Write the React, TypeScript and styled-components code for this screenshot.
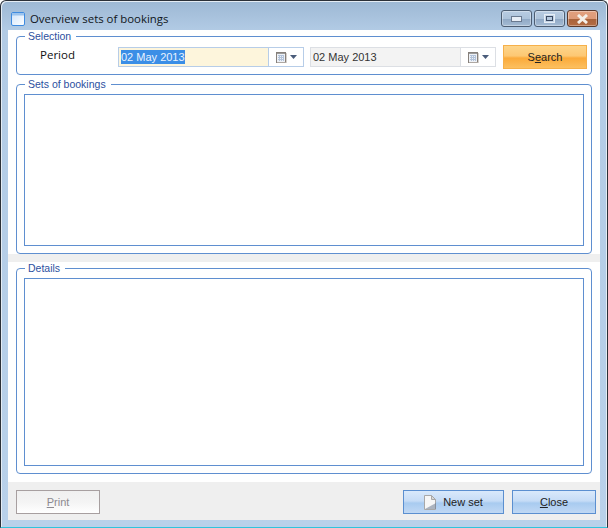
import styled, { createGlobalStyle } from "styled-components";

const Global = createGlobalStyle`
    html, body {
        margin: 0;
        padding: 0;
        background: #fff;
    }
    * {
        box-sizing: border-box;
    }
`

const Frame = styled.div`
    width: 608px;
    height: 528px;
    display: flex;
    flex-direction: column;
    padding: 0 7px 7px 7px;
    border: 1px solid #2b3038;
    border-bottom: 1px solid #30c4dc;
    border-radius: 6px 6px 0 0;
    box-shadow: inset 1px 1px 0 #e4ecf4, inset -1px 0 0 #e4ecf4;
    background: linear-gradient(to bottom, #9db8d4 0, #b2cbe5 30px, #b9d1ea 100%);
    font-family: "Liberation Sans", Arial, sans-serif;
    font-size: 11px;
    color: #1a1a1a;
`

const TitleBar = styled.div`
    height: 29px;
    flex: none;
    display: flex;
    align-items: flex-start;
    padding: 0 2px 0 3px;
`

const TitleIcon = styled.div`
    display: flex;
    margin-top: 11px;
`

const TitleText = styled.span`
    margin: 10px 0 0 5px;
    font-family: "Open Sans", sans-serif;
    font-size: 11.4px;
    line-height: 16px;
    color: #0f1620;
`

const WindowButtons = styled.div`
    margin-left: auto;
    display: flex;
    gap: 2px;
    margin-top: 9px;
`

const WindowButton = styled.div<{ $close?: boolean }>`
    width: 31px;
    height: 17px;
    display: flex;
    align-items: center;
    justify-content: center;
    border: 1px solid ${p => p.$close ? "#5a3a2c" : "#4c5d72"};
    border-radius: 3px;
    box-shadow: inset 0 0 0 1px rgba(255, 255, 255, 0.35);
    background: ${p => p.$close
        ? "linear-gradient(to bottom, #e2a07e 0, #dd9a78 52%, #a8623a 53%, #b46d44 100%)"
        : "linear-gradient(to bottom, #b8cce2 0, #adc3da 50%, #8fa8c4 51%, #a4bbd4 100%)"};
`

const Body = styled.div`
    flex: 1;
    min-height: 0;
    display: flex;
    flex-direction: column;
    background: #efefef;
`

const TopPane = styled.div`
    height: 224px;
    flex: none;
    display: flex;
    flex-direction: column;
    gap: 3px;
    padding: 0 8px;
    background: #fff;
`

const BottomPane = styled.div`
    height: 220px;
    flex: none;
    margin-top: 8px;
    padding: 0 8px;
    background: #fff;
`

const Group = styled.fieldset<{ $height: number }>`
    height: ${p => p.$height}px;
    margin: 0;
    padding: 0 7px 7px 7px;
    border: 1px solid #5f8fd0;
    border-radius: 4px;
    min-width: 0;
    flex: none;
`

const Legend = styled.legend`
    margin-left: 1px;
    padding: 0 5px 0 3px;
    font-size: 10.5px;
    line-height: 12px;
    color: #2c50a0;
`

const InnerBox = styled.div<{ $height: number }>`
    height: ${p => p.$height}px;
    margin-top: 4px;
    border: 1px solid #5f8fd0;
    background: #fff;
`

const SelectionRow = styled.div`
    display: flex;
    align-items: flex-start;
    margin-top: 3px;
`

const PeriodLabel = styled.span`
    width: 94px;
    flex: none;
    padding: 2px 0 0 16px;
    font-family: "Open Sans", sans-serif;
    font-size: 11.5px;
    line-height: 16px;
    color: #111;
`

const DateField = styled.div<{ $disabled?: boolean }>`
    width: 186px;
    height: 20px;
    flex: none;
    margin: 2px 6px 0 0;
    display: flex;
    border: 1px solid ${p => p.$disabled ? "#dcdfe4" : "#b7cde8"};
    background: #fff;
`

const DateValue = styled.div<{ $disabled?: boolean }>`
    flex: 1;
    display: flex;
    align-items: center;
    padding-left: 2px;
    background: ${p => p.$disabled ? "#f3f3f3" : "#fdf5dc"};
    color: #333;
`

const Selected = styled.span`
    background: #3b8ee6;
    color: #e8f2ff;
    line-height: 14px;
`

const CalendarButton = styled.div<{ $disabled?: boolean }>`
    width: 35px;
    display: flex;
    align-items: center;
    justify-content: center;
    gap: 3px;
    border-left: 1px solid ${p => p.$disabled ? "#dcdfe4" : "#b7cde8"};
`

const Button = styled.button<{ $variant: "orange" | "blue" | "disabled"; $width: number }>`
    width: ${p => p.$width}px;
    height: 24px;
    margin: 0;
    padding: 0;
    flex: none;
    display: flex;
    align-items: center;
    justify-content: center;
    gap: 6px;
    font: inherit;
    color: ${p => p.$variant === "disabled" ? "#8d8a90" : "#222"};
    border: 1px solid ${p => p.$variant === "orange" ? "#f6b04a" : p.$variant === "blue" ? "#5b8fd0" : "#a79fa0"};
    background: ${p => p.$variant === "orange"
        ? "linear-gradient(to bottom, #fdd58b 0, #fdc873 45%, #fbaa3a 55%, #fcc060 100%)"
        : p.$variant === "blue"
        ? "linear-gradient(to bottom, #d9e9fb 0, #c6dcf6 45%, #a8cbf0 55%, #c0d8f4 100%)"
        : "linear-gradient(to bottom, #f0f0f0 0, #f4f4f4 50%, #fff 100%)"};
    & u {
        text-decoration-thickness: 1px;
    }
`

const SearchSlot = styled.div`
    flex: none;
    margin-left: 1px;
`

const Footer = styled.div`
    flex: 1;
    display: flex;
    align-items: flex-start;
    padding: 8px 4px 0 8px;
`

const FooterRight = styled.div`
    margin-left: auto;
    display: flex;
    gap: 8px;
`

const CalendarIcon = () => (
    <svg width="11" height="11" viewBox="0 0 11 11">
        <rect x="0.5" y="0.5" width="9" height="10" fill="#eef1f6" stroke="#86807b" />
        <path d="M1 1.5h8" stroke="#9a9a9a" />
        <path d="M2 3.5h6M2 5.5h6M2 7.5h6M3.5 3v6M5.5 3v6M7.5 3v6" stroke="#b3c3da" strokeWidth="1" />
        <path d="M10.5 1v10H1" stroke="#d6d1cc" fill="none" />
    </svg>
)

const Arrow = () => (
    <svg width="7" height="4" viewBox="0 0 7 4">
        <path d="M0 0h7L3.5 4z" fill="#4a5c7a" />
    </svg>
)

const WindowIcon = () => (
    <svg width="14" height="14" viewBox="0 0 14 14">
        <defs>
            <linearGradient id="windowFill" x1="0" y1="0" x2="1" y2="1">
                <stop offset="0" stopColor="#cfe3fa" />
                <stop offset="1" stopColor="#ffffff" />
            </linearGradient>
        </defs>
        <rect x="0.5" y="0.5" width="13" height="13" rx="1.5" fill="url(#windowFill)" stroke="#3f8be0" />
        <rect x="1" y="1" width="12" height="2.5" fill="#9cc4ee" />
    </svg>
)

const PageIcon = () => (
    <svg width="13" height="15" viewBox="0 0 13 15">
        <path d="M0.5 0.5h7l4 4v10h-11z" fill="#f6f6f6" stroke="#a8a8a8" />
        <path d="M7.5 0.5v4h4z" fill="#d8d8d8" stroke="#a8a8a8" />
        <path d="M1 14h11v-6z" fill="#6d7c92" opacity="0.55" />
    </svg>
)

export default function App() {
    return (
        <>
            <Global />
            <Frame>
                <TitleBar>
                    <TitleIcon><WindowIcon /></TitleIcon>
                    <TitleText>Overview sets of bookings</TitleText>
                    <WindowButtons>
                        <WindowButton>
                            <svg width="11" height="6" viewBox="0 0 11 6">
                                <rect x="0.5" y="0.5" width="10" height="5" fill="#e8eef6" stroke="#6a7a90" />
                            </svg>
                        </WindowButton>
                        <WindowButton>
                            <svg width="11" height="9" viewBox="0 0 11 9">
                                <rect x="0.5" y="0.5" width="10" height="8" fill="#c4d4e6" stroke="#e6eef6" />
                                <rect x="2.5" y="2.5" width="6" height="4" fill="#b4c8de" stroke="#3a4a62" />
                            </svg>
                        </WindowButton>
                        <WindowButton $close>
                            <svg width="13" height="10" viewBox="0 0 13 10">
                                <path d="M2 1l9 8M11 1l-9 8" stroke="#f4efe8" strokeWidth="3" />
                            </svg>
                        </WindowButton>
                    </WindowButtons>
                </TitleBar>
                <Body>
                    <TopPane>
                        <Group $height={45}>
                            <Legend>Selection</Legend>
                            <SelectionRow>
                                <PeriodLabel>Period</PeriodLabel>
                                <DateField>
                                    <DateValue><Selected>02 May 2013</Selected></DateValue>
                                    <CalendarButton><CalendarIcon /><Arrow /></CalendarButton>
                                </DateField>
                                <DateField $disabled>
                                    <DateValue $disabled>02 May 2013</DateValue>
                                    <CalendarButton $disabled><CalendarIcon /><Arrow /></CalendarButton>
                                </DateField>
                                <SearchSlot>
                                    <Button $variant="orange" $width={84}><span>S<u>e</u>arch</span></Button>
                                </SearchSlot>
                            </SelectionRow>
                        </Group>
                        <Group $height={176}>
                            <Legend>Sets of bookings</Legend>
                            <InnerBox $height={152} />
                        </Group>
                    </TopPane>
                    <BottomPane>
                        <Group $height={212}>
                            <Legend>Details</Legend>
                            <InnerBox $height={188} />
                        </Group>
                    </BottomPane>
                    <Footer>
                        <Button $variant="disabled" $width={84}><span><u>P</u>rint</span></Button>
                        <FooterRight>
                            <Button $variant="blue" $width={101}><PageIcon /><span>New set</span></Button>
                            <Button $variant="blue" $width={84}><span><u>C</u>lose</span></Button>
                        </FooterRight>
                    </Footer>
                </Body>
            </Frame>
        </>
    )
}
